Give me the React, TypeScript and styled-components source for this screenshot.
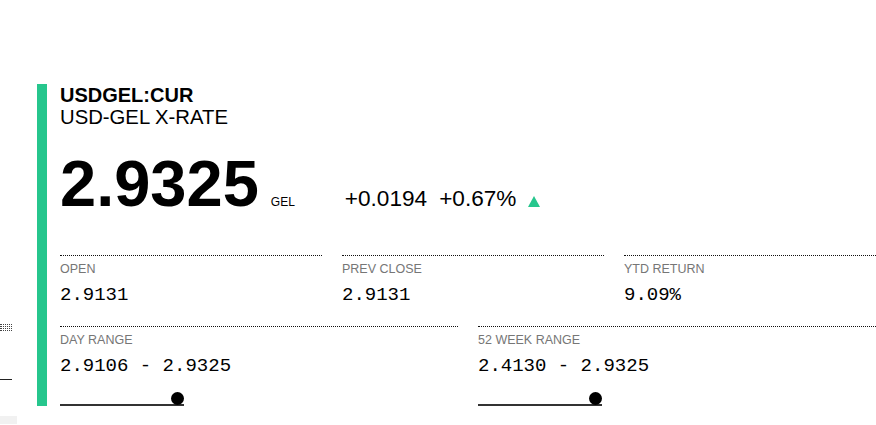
import React from 'react';
import styled, { createGlobalStyle } from 'styled-components';

const GlobalStyle = createGlobalStyle`
  html, body {
    margin: 0;
    padding: 0;
    background: #fff;
    overflow: hidden;
  }
  body {
    font-family: "Liberation Sans", Arial, sans-serif;
    color: #000;
  }
`;

const Page = styled.div`
  display: flex;
  align-items: flex-start;
  width: 900px;
  height: 425px;
  overflow: hidden;
`;

const Gutter = styled.aside`
  display: flex;
  flex-direction: column;
  width: 37px;
  flex-shrink: 0;
`;

const DotGrid = styled.div`
  margin-top: 324px;
  width: 12px;
  display: flex;
  flex-direction: column;
  gap: 1px;

  span {
    display: block;
    border-top: 1px dotted #444;
  }
`;

const ShortRule = styled.div`
  margin-top: 48px;
  width: 12px;
  border-top: 1px solid #222;
`;

const GreyTab = styled.div`
  margin-top: 36px;
  width: 17px;
  height: 8px;
  background: #f1f1f1;
`;

const Card = styled.section`
  margin-top: 84px;
  border-left: 10px solid #26c68d;
  padding-left: 13px;
  width: 826px;
  flex-shrink: 0;
`;

const Ticker = styled.h1`
  margin: 0;
  font-size: 20px;
  line-height: 22px;
  font-weight: 700;
`;

const Name = styled.h2`
  margin: 0;
  font-size: 20.3px;
  line-height: 22px;
  font-weight: 400;
`;

const PriceRow = styled.div`
  display: flex;
  align-items: baseline;
  margin-top: 24px;
`;

const Price = styled.span`
  font-size: 65px;
  line-height: 64px;
  font-weight: 700;
`;

const Currency = styled.span`
  font-size: 12px;
  margin-left: 12px;
`;

const Change = styled.span<{ $gap?: number }>`
  font-size: 22.6px;
  margin-left: ${(p) => p.$gap ?? 0}px;
`;

const UpArrow = styled.span`
  display: inline-block;
  width: 0;
  height: 0;
  margin-left: 12px;
  border-left: 6.5px solid transparent;
  border-right: 6.5px solid transparent;
  border-bottom: 11px solid #26c68d;
  transform: translateY(1px);
`;

const StatsRow = styled.div<{ $cols: string; $top: number }>`
  display: grid;
  grid-template-columns: ${(p) => p.$cols};
  column-gap: 20px;
  margin-top: ${(p) => p.$top}px;
`;

const Stat = styled.div`
  border-top: 1px dotted #111;
  padding-top: 6px;
`;

const Label = styled.div`
  font-size: 12.5px;
  line-height: 15px;
  color: #767676;
  text-transform: uppercase;
`;

const Value = styled.div`
  margin-top: 7px;
  font-family: "Liberation Mono", "DejaVu Sans Mono", monospace;
  font-size: 19px;
  line-height: 22px;
  color: #000;
`;

const Slider = styled.div`
  position: relative;
  width: 124px;
  height: 16px;
  margin-top: 11px;
  border-bottom: 2px solid #333;
`;

const Knob = styled.span`
  position: absolute;
  bottom: -1px;
  width: 13px;
  height: 13px;
  border-radius: 50%;
  background: #000;
  transform: translateX(-100%);
`;

type StatItem = { label: string; value: string; range?: number };

const topStats: StatItem[] = [
  { label: 'Open', value: '2.9131' },
  { label: 'Prev Close', value: '2.9131' },
  { label: 'YTD Return', value: '9.09%' },
];

const rangeStats: StatItem[] = [
  { label: 'Day Range', value: '2.9106 - 2.9325', range: 1 },
  { label: '52 Week Range', value: '2.4130 - 2.9325', range: 1 },
];

const StatCell = ({ item }: { item: StatItem }) => (
  <Stat>
    <Label>{item.label}</Label>
    <Value>{item.value.replace(/ /g, '\u00a0')}</Value>
    {item.range !== undefined && (
      <Slider>
        <Knob style={{ left: `${item.range * 100}%` }} />
      </Slider>
    )}
  </Stat>
);

const App = () => {
  return (
    <Page>
      <GlobalStyle />
      <Gutter>
        <DotGrid>
          <span />
          <span />
          <span />
          <span />
        </DotGrid>
        <ShortRule />
        <GreyTab />
      </Gutter>
      <Card>
        <Ticker>USDGEL:CUR</Ticker>
        <Name>USD-GEL X-RATE</Name>
        <PriceRow>
          <Price>2.9325</Price>
          <Currency>GEL</Currency>
          <Change $gap={50}>+0.0194</Change>
          <Change $gap={12}>+0.67%</Change>
          <UpArrow />
        </PriceRow>
        <StatsRow $cols="262px 262px 262px" $top={39}>
          {topStats.map((s) => (
            <StatCell key={s.label} item={s} />
          ))}
        </StatsRow>
        <StatsRow $cols="398px 408px" $top={20}>
          {rangeStats.map((s) => (
            <StatCell key={s.label} item={s} />
          ))}
        </StatsRow>
      </Card>
    </Page>
  );
};

export default App;
